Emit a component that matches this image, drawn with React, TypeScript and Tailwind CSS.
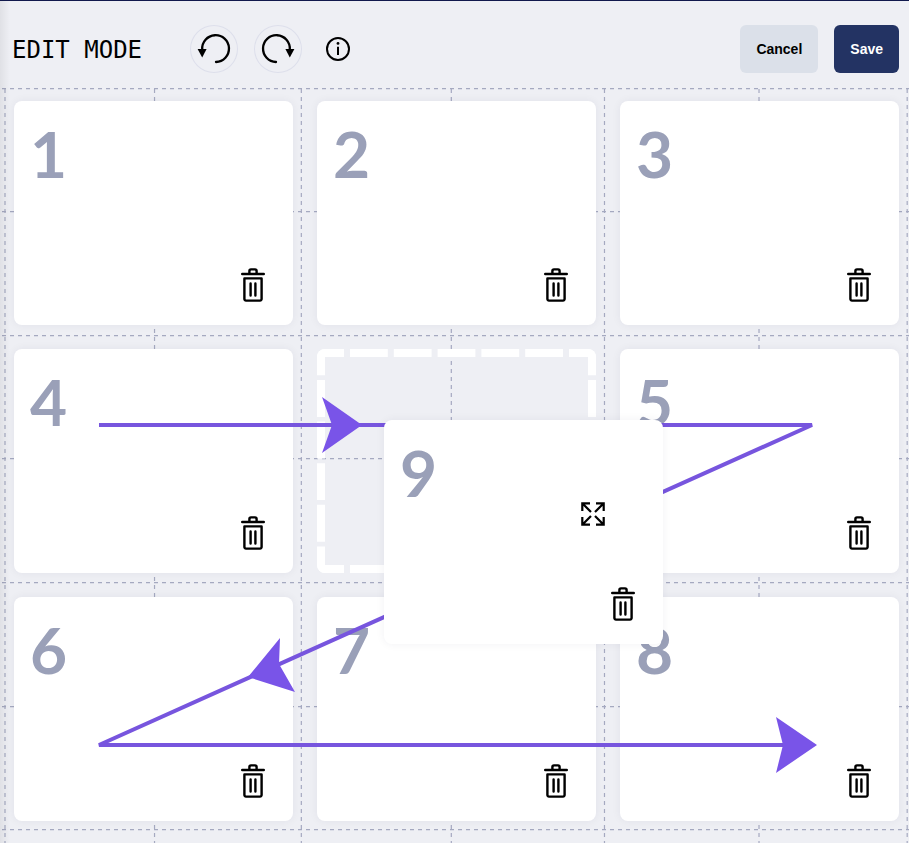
import type { ReactNode } from "react";

const HORIZONTAL_GUIDES = [0, 123, 247, 370, 494, 618, 741];
const VERTICAL_GUIDES = ["0.55%", "17%", "33.15%", "49.65%", "66.5%", "83.5%", "99.8%"];

function GuideLines() {
  return (
    <svg aria-hidden="true" className="pointer-events-none absolute inset-0 h-full w-full overflow-visible" stroke="#a5a9c0" strokeWidth="1.2" strokeDasharray="4 4">
      {HORIZONTAL_GUIDES.map((y) => (
        <line key={y} x1="2" x2="100%" y1={y - 0.3} y2={y - 0.3} />
      ))}
      {VERTICAL_GUIDES.map((x) => (
        <line key={x} x1={x} x2={x} y1="0" y2="100%" />
      ))}
    </svg>
  );
}

function TurnIcon({ mirrored = false }: { mirrored?: boolean }) {
  return (
    <svg aria-hidden="true" viewBox="0 0 48 48" className="h-12 w-12">
      <g transform={mirrored ? "translate(48 0) scale(-1 1)" : undefined}>
        <path d="M26 37A13.4 13.4 0 1 0 12.2 24.5" fill="none" stroke="#000" strokeWidth="2.3" strokeLinecap="round" />
        <path d="M7.6 24H16.6L12.2 32.5Z" />
      </g>
    </svg>
  );
}

function InfoIcon() {
  return (
    <svg aria-hidden="true" viewBox="0 0 24 24" className="h-6 w-6">
      <circle cx="12" cy="12" r="11" fill="none" stroke="#000" strokeWidth="2" />
      <circle cx="12" cy="6.4" r="1.4" />
      <path d="M12 9.8V18" stroke="#000" strokeWidth="2" />
    </svg>
  );
}

function TrashIcon() {
  return (
    <svg aria-hidden="true" viewBox="0 0 24 34" className="h-[34px] w-6" fill="none" stroke="#000" strokeWidth="2.4">
      <path d="M8.4 5V3a1.6 1.6 0 0 1 1.6-1.6h4A1.6 1.6 0 0 1 15.6 3v2" />
      <path d="M1.2 6H22.8" strokeLinecap="round" />
      <path d="M3.4 10.4H20.6V31a1.6 1.6 0 0 1-1.6 1.6H5A1.6 1.6 0 0 1 3.4 31Z" strokeLinejoin="round" />
      <path d="M9.6 15.4V27.6M14.4 15.4V27.6" strokeLinecap="round" />
    </svg>
  );
}

function ExpandIcon() {
  return (
    <svg aria-hidden="true" viewBox="0 0 24 24" className="h-6 w-6" fill="none" stroke="#000" strokeWidth="2.2">
      <path d="M1.3 9V1.3H9M1.3 1.3L10 10" />
      <path d="M15 1.3H22.7V9M22.7 1.3L14 10" />
      <path d="M1.3 15V22.7H9M1.3 22.7L10 14" />
      <path d="M15 22.7H22.7V15M22.7 22.7L14 14" />
    </svg>
  );
}

function Card({ number, children }: { number: number; children?: ReactNode }) {
  return (
    <article className="relative flex h-56 flex-col justify-between rounded-lg bg-white pt-4 pr-7 pb-[23px] pl-4 shadow-[0_0_10px_rgba(30,35,70,0.06)]">
      <h2 className="font-['Lato',sans-serif] text-[64px] leading-[74px] font-bold text-[#9aa0b8]">{number}</h2>
      {children}
      <button type="button" aria-label={`Delete card ${number}`} className="self-end">
        <TrashIcon />
      </button>
    </article>
  );
}

function DropSlot() {
  return (
    <div className="h-56 overflow-hidden rounded-lg">
      <svg aria-hidden="true" viewBox="0 0 279 224" preserveAspectRatio="none" className="h-full w-full" fill="none" stroke="#fff" strokeWidth="8">
        <g strokeDasharray="37.8 6" strokeDashoffset="10.8">
          <path d="M0 4H279" />
          <path d="M0 220H279" />
        </g>
        <g strokeDasharray="36.9 4.7" strokeDashoffset="10.6">
          <path d="M4 0V224" />
          <path d="M275 0V224" />
        </g>
      </svg>
    </div>
  );
}

function FlowArrow() {
  return (
    <svg aria-hidden="true" viewBox="0 0 885 720" preserveAspectRatio="none" className="pointer-events-none absolute inset-0 z-10 h-full w-full">
      <path d="M85 324H798L85 644H798" fill="none" stroke="#7755de" strokeWidth="4" strokeLinejoin="bevel" />
      <g fill="#7954e8">
        <path d="M308 296L348 324L308 352L318 324Z" />
        <path d="M234 576L266 537L265 563L281 591Z" />
        <path d="M762 616L803 644L762 672L769 644Z" />
      </g>
    </svg>
  );
}

export default function App() {
  return (
    <div className="relative flex min-h-screen flex-col overflow-hidden border-t border-[#11194d] bg-[#eeeff4] text-black">
      <header className="flex h-[88px] shrink-0 items-center justify-between pt-2 pr-2.5 pl-3">
        <div className="flex items-center">
          <h1 className="mr-12 pt-0.5 font-['DejaVu_Sans_Mono',monospace] text-2xl whitespace-nowrap">EDIT MODE</h1>
          <div className="flex items-center gap-4">
            <button type="button" aria-label="Undo" className="flex h-12 w-12 items-center justify-center rounded-full ring-1 ring-[#dddfeb] ring-inset">
              <TurnIcon />
            </button>
            <button type="button" aria-label="Redo" className="flex h-12 w-12 items-center justify-center rounded-full ring-1 ring-[#dddfeb] ring-inset">
              <TurnIcon mirrored />
            </button>
          </div>
          <button type="button" aria-label="Information" className="ml-6">
            <InfoIcon />
          </button>
        </div>
        <div className="flex gap-4 font-['Liberation_Sans',sans-serif] text-sm font-bold">
          <button type="button" className="h-12 rounded-md bg-[#dbe0e9] px-4">Cancel</button>
          <button type="button" className="h-12 rounded-md bg-[#233363] px-4 text-white">Save</button>
        </div>
      </header>

      <main className="relative flex-1 pt-3 pr-2.5 pb-[22px] pl-3.5">
        <GuideLines />
        <div className="relative grid grid-cols-3 gap-6">
          <Card number={1} />
          <Card number={2} />
          <Card number={3} />
          <Card number={4} />
          <div className="relative">
            <DropSlot />
            <div className="absolute top-[71px] left-[67px] z-20 w-full">
              <Card number={9}>
                <button type="button" aria-label="Move card 9" className="absolute top-[82px] right-[58px]">
                  <ExpandIcon />
                </button>
              </Card>
            </div>
          </div>
          <Card number={5} />
          <Card number={6} />
          <Card number={7} />
          <Card number={8} />
          <FlowArrow />
        </div>
      </main>

      <div aria-hidden="true" className="pointer-events-none absolute inset-y-0 left-0 w-2.5 bg-linear-to-r from-black/6 to-transparent" />
    </div>
  );
}
